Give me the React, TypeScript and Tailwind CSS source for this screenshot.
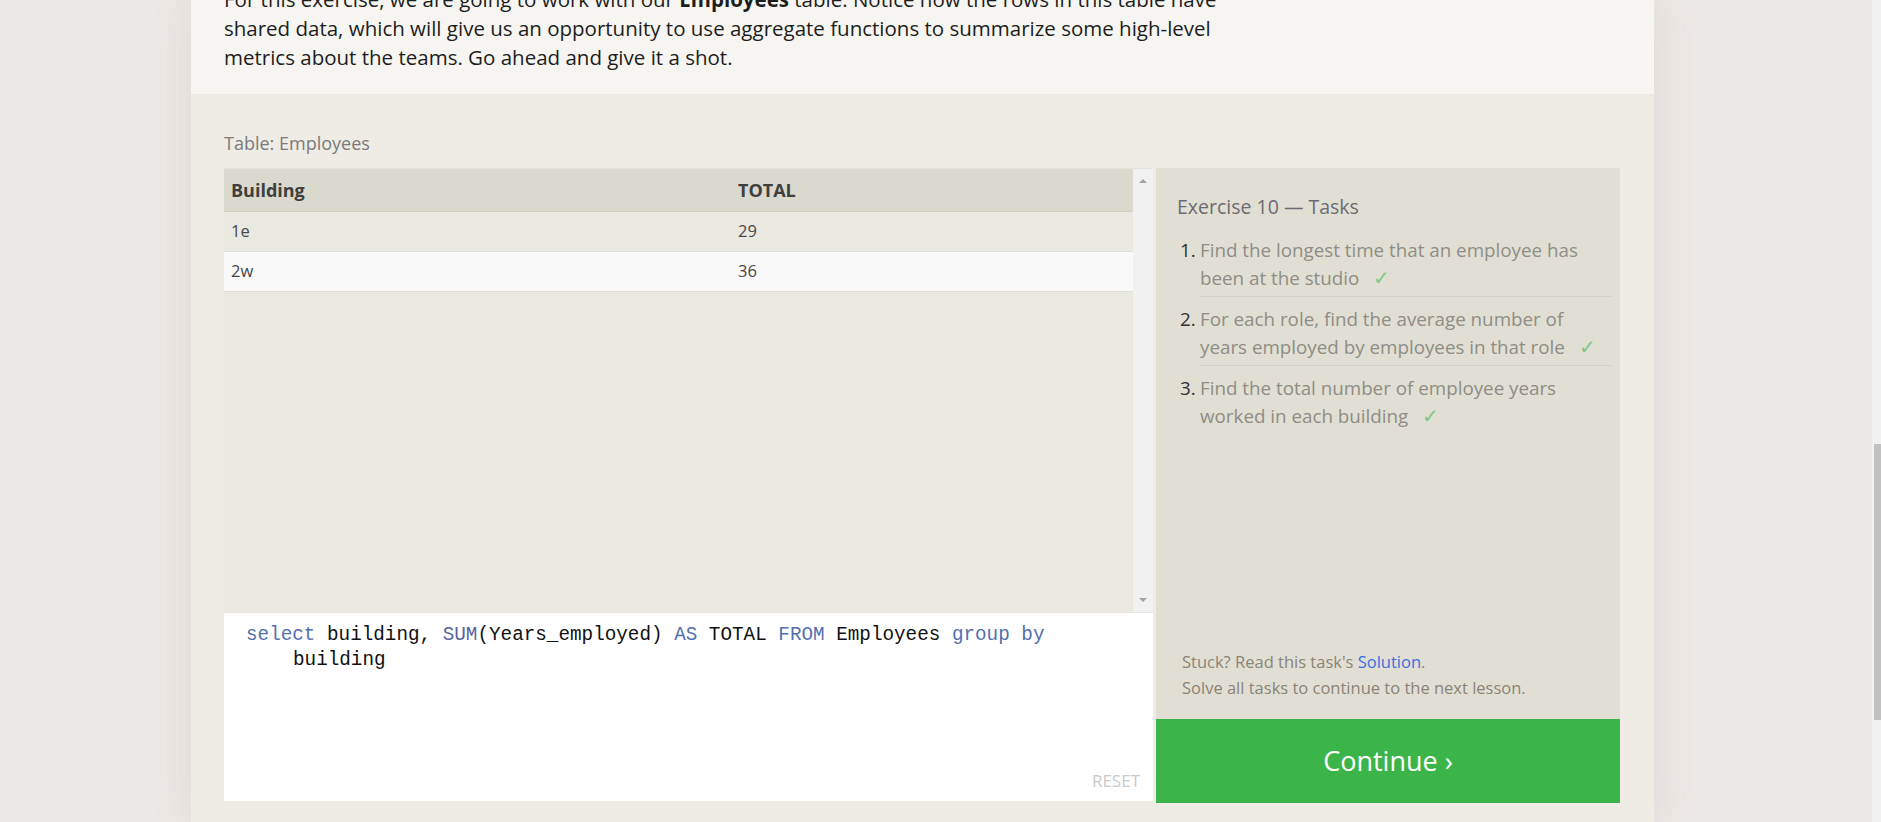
import React from 'react';

const rows = [
  { building: '1e', total: '29', bg: 'bg-[#eae9e1]' },
  { building: '2w', total: '36', bg: 'bg-[#f9f9f9]' },
];

const tasks = [
  ['Find the longest time that an employee has', 'been at the studio'],
  ['For each role, find the average number of', 'years employed by employees in that role'],
  ['Find the total number of employee years', 'worked in each building'],
];

const Kw = ({ children }: { children: React.ReactNode }) => (
  <span className="text-[#5470ae]">{children}</span>
);

const App = () => {
  return (
    <div className="h-[822px] w-full overflow-hidden flex bg-[#ece8e5] font-['Open_Sans',sans-serif]">
      <div className="flex-1 flex">
        {/* Main lesson card */}
        <div className="ml-[191px] w-[1463px] h-[822px] flex flex-col shadow-[0_0_40px_rgba(120,100,90,0.12)]">
          {/* Intro text */}
          <div className="bg-[#f6f5f1] px-[33px] pb-[22px] border-b border-[#ebe8e1]">
            <p className="-mt-[15px] text-[20.5px] leading-[29px] text-[#1d1d1d]">
              For this exercise, we are going to work with our <b>Employees</b> table. Notice how the rows in this table have
              <br />
              shared data, which will give us an opportunity to use aggregate functions to summarize some high-level
              <br />
              metrics about the teams. Go ahead and give it a shot.
            </p>
          </div>

          {/* Exercise area */}
          <div className="flex-1 bg-[#efece5] rounded-tr-md pl-[33px] pr-[34px] pt-[36px]">
            <div className="text-[18px] leading-[24px] text-[#7a7a7a] mb-[13px]">Table: Employees</div>

            <div className="flex gap-[3px]">
              {/* Left: results + editor */}
              <div className="w-[929px] flex flex-col">
                <div className="h-[444px] flex bg-[#eae9e1] border-t border-[#e3e1d9]">
                  <div className="flex-1">
                    <div className="h-[43px] flex items-center bg-[#dad9cd] border-b border-[#d2d0c4] text-[18px] font-bold text-[#3f3f3f]">
                      <div className="w-[514px] pl-[7px]">Building</div>
                      <div>TOTAL</div>
                    </div>
                    {rows.map((r) => (
                      <div
                        key={r.building}
                        className={`h-[40px] flex items-center border-b border-[#e0ded6] text-[16.5px] text-[#474747] ${r.bg}`}
                      >
                        <div className="w-[514px] pl-[7px]">{r.building}</div>
                        <div>{r.total}</div>
                      </div>
                    ))}
                  </div>
                  {/* inner scrollbar */}
                  <div className="w-[20px] bg-[#f1f1f1] flex flex-col items-center justify-between py-[10px]">
                    <div className="w-0 h-0 border-l-[4px] border-r-[4px] border-b-[4px] border-l-transparent border-r-transparent border-b-[#a3a3a3]" />
                    <div className="w-0 h-0 border-l-[4px] border-r-[4px] border-t-[4px] border-l-transparent border-r-transparent border-t-[#a3a3a3]" />
                  </div>
                </div>

                <div className="h-[189px] bg-white border-t border-[#e6e4dd] flex flex-col justify-between pl-[22px] pr-[13px] pt-[10px] pb-[8px]">
                  <div className="font-['Liberation_Mono',monospace] text-[19.3px] leading-[25px] text-[#111]">
                    <div>
                      <Kw>select</Kw> building, <span className="text-[#5a5f9e]">SUM</span>(Years_employed) <Kw>AS</Kw> TOTAL{' '}
                      <Kw>FROM</Kw> Employees <Kw>group by</Kw>
                    </div>
                    <div className="pl-[47px]">building</div>
                  </div>
                  <div className="self-end text-[17px] leading-[24px] text-[#cacaca]">RESET</div>
                </div>
              </div>

              {/* Right: tasks */}
              <div className="w-[464px] flex flex-col">
                <div className="h-[551px] bg-[#e1dfd4] flex flex-col justify-between pt-[25px] pb-[18px]">
                  <div>
                    <div className="pl-[21px] text-[19.5px] leading-[27px] text-[#6b6b74]">Exercise 10 — Tasks</div>
                    <ol className="mt-[15px] pl-[44px] pr-[8px]">
                      {tasks.map((t, i) => (
                        <li
                          key={i}
                          className={`relative text-[18.8px] leading-[28px] text-[#8e8d86] pt-[1px] pb-[4px] ${
                            i < 2 ? 'border-b border-[#d3d1c6] mb-[7px]' : ''
                          }`}
                        >
                          <span className="absolute -left-[20px] text-[#2f2f2f]">{i + 1}.</span>
                          {t[0]}
                          <br />
                          {t[1]}
                          <span className="ml-[14px] text-[20px] text-[#7fcb86]">✓</span>
                        </li>
                      ))}
                    </ol>
                  </div>
                  <div className="pl-[26px] text-[16.5px] leading-[26px] text-[#8a8377]">
                    <div>
                      Stuck? Read this task's <span className="text-[#3b6fdc]">Solution</span>.
                    </div>
                    <div>Solve all tasks to continue to the next lesson.</div>
                  </div>
                </div>
                <button className="h-[84px] bg-[#3bb54a] text-white text-[27px] flex items-center justify-center">
                  Continue ›
                </button>
              </div>
            </div>
          </div>
        </div>
      </div>

      {/* page scrollbar */}
      <div className="w-[9px] bg-[#f1f1f1] pt-[444px]">
        <div className="h-[276px] ml-[2px] bg-[#c1c1c1]" />
      </div>
    </div>
  );
};

export default App;
